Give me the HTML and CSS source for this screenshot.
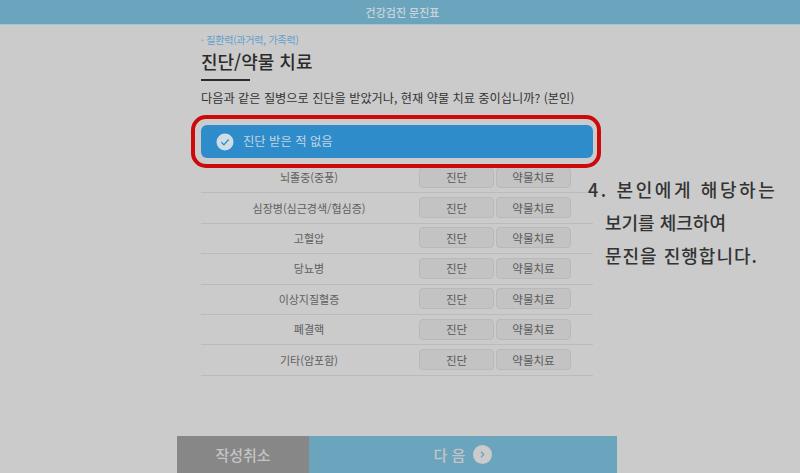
FILE: index.html
```html
<!DOCTYPE html>
<html lang="ko">
<head>
    <meta charset="UTF-8">
    <meta name="viewport" content="width=device-width, initial-scale=1.0">
    <title>건강검진 문진표</title>
    <link rel="stylesheet" href="styles.css">
</head>
<body>
    <header class="top-bar">건강검진 문진표</header>

    <main class="content">
        <div class="crumb">· 질환력(과거력, 가족력)</div>
        <h1 class="title">진단/약물 치료</h1>
        <p class="question">다음과 같은 질병으로 진단을 받았거나, 현재 약물 치료 중이십니까? (본인)</p>

        <button class="none-btn">
            <svg class="check" width="18" height="18" viewBox="0 0 18 18">
                <circle cx="9" cy="9" r="8.5" fill="#cfdde6"/>
                <path d="M5.4 9.3l2.5 2.6 4.7-5.4" fill="none" stroke="#2f8ccb" stroke-width="1.3"/>
            </svg>
            <span class="none-label">진단 받은 적 없음</span>
        </button>

        <div class="rows">
            <div class="row">
                <span class="name">뇌졸중(중풍)</span>
                <button class="opt">진단</button>
                <button class="opt">약물치료</button>
            </div>
            <div class="row">
                <span class="name">심장병(심근경색/협심증)</span>
                <button class="opt">진단</button>
                <button class="opt">약물치료</button>
            </div>
            <div class="row">
                <span class="name">고혈압</span>
                <button class="opt">진단</button>
                <button class="opt">약물치료</button>
            </div>
            <div class="row">
                <span class="name">당뇨병</span>
                <button class="opt">진단</button>
                <button class="opt">약물치료</button>
            </div>
            <div class="row">
                <span class="name">이상지질혈증</span>
                <button class="opt">진단</button>
                <button class="opt">약물치료</button>
            </div>
            <div class="row">
                <span class="name">폐결핵</span>
                <button class="opt">진단</button>
                <button class="opt">약물치료</button>
            </div>
            <div class="row">
                <span class="name">기타(암포함)</span>
                <button class="opt">진단</button>
                <button class="opt">약물치료</button>
            </div>
        </div>
    </main>

    <footer class="bottom">
        <button class="cancel">작성취소</button>
        <button class="next">
            다 음
            <svg width="19" height="19" viewBox="0 0 19 19">
                <circle cx="9.5" cy="9.5" r="9.5" fill="#cbcbcb"/>
                <path d="M8 6.8l2.6 2.7L8 12.2" fill="none" stroke="#6ba5bd" stroke-width="1.4"/>
            </svg>
        </button>
    </footer>

    <!-- guide overlay -->
    <div class="highlight"></div>
    <div class="note">
        <div class="note-first">4. 본인에게 해당하는</div>
        <div class="note-second">보기를 체크하여</div>
        <div class="note-third">문진을 진행합니다.</div>
    </div>
</body>
</html>
```

FILE: styles.css
```css
* {
    box-sizing: border-box;
}

html, body {
    height: 100%;
}

body {
    margin: 0;
    height: 473px;
    overflow: hidden;
    display: flex;
    flex-direction: column;
    background-color: #cbcbcb;
    font-family: "Noto Sans CJK KR", "Noto Sans", sans-serif;
    color: #333;
    position: relative;
}

button {
    font-family: inherit;
    padding: 0;
    cursor: pointer;
}

.top-bar {
    height: 25px;
    line-height: 24px;
    padding-left: 5px;
    background-color: #6ba5bd;
    border-bottom: 1px solid #a9c4d0;
    color: #c9d5da;
    font-size: 11px;
    font-weight: 500;
    text-align: center;
}

.content {
    width: 392px;
    margin-left: 201px;
}

.crumb {
    margin-top: 6px;
    height: 16px;
    line-height: 17px;
    font-size: 10px;
    letter-spacing: -0.2px;
    color: #5e9fcf;
}

.title {
    margin: 0;
    height: 34px;
    line-height: 28px;
    font-size: 18px;
    font-weight: 500;
    color: #2b2b2b;
    position: relative;
}

.title::after {
    content: "";
    position: absolute;
    left: 0;
    bottom: 0;
    width: 49px;
    height: 2px;
    background-color: #2b2b2b;
}

.question {
    margin: 7px 0 0;
    height: 20px;
    line-height: 20px;
    font-size: 12.2px;
    color: #333;
    white-space: nowrap;
}

.none-btn {
    display: flex;
    align-items: center;
    gap: 9px;
    width: 100%;
    height: 33px;
    margin-top: 17px;
    padding-left: 15px;
    border: none;
    border-radius: 6px;
    background-color: #2f8ccb;
    color: #c3d6e2;
    font-size: 12.3px;
}

.none-label {
    line-height: 16px;
    padding-bottom: 2px;
}

.rows {
    margin-top: 5px;
}

.row {
    display: grid;
    grid-template-columns: 216px 75px 75px;
    column-gap: 2px;
    align-items: center;
    height: 30.4px;
    padding-bottom: 1px;
    border-bottom: 1px solid #bbb;
}

.name {
    text-align: center;
    font-size: 11px;
    color: #606060;
}

.opt {
    height: 21px;
    border: 1px solid #b9b9b9;
    border-radius: 4px;
    background-color: #c3c3c3;
    color: #5a5a5a;
    font-size: 11.5px;
}

.bottom {
    margin-top: auto;
    margin-left: 177px;
    width: 440px;
    height: 37px;
    display: flex;
}

.cancel, .next {
    border: none;
    height: 100%;
    font-size: 15px;
    font-weight: 500;
    color: #c4c4c4;
}

.cancel {
    width: 132px;
    background-color: #878787;
}

.next {
    flex: 1;
    display: flex;
    align-items: center;
    justify-content: center;
    gap: 8px;
    background-color: #6ba5bd;
}

.highlight {
    position: absolute;
    left: 191px;
    top: 115px;
    width: 410px;
    height: 53px;
    border: 4px solid #cc0a0a;
    border-radius: 15px;
}

.note {
    position: absolute;
    left: 588px;
    top: 173px;
    font-size: 18px;
    font-weight: 500;
    color: #333;
    white-space: nowrap;
}

.note-first {
    height: 33px;
    line-height: 33px;
    letter-spacing: 2.6px;
}

.note-second {
    height: 33px;
    line-height: 33px;
    padding-left: 17px;
}

.note-third {
    height: 33px;
    line-height: 33px;
    padding-left: 17px;
    letter-spacing: 1px;
}
```
